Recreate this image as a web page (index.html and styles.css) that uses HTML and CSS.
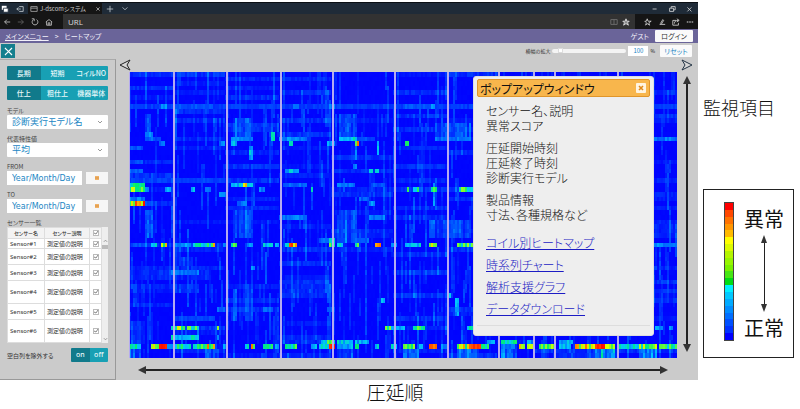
FILE: index.html
```html
<!DOCTYPE html>
<html lang="ja">
<head>
<meta charset="utf-8">
<title>ヒートマップ</title>
<link rel="stylesheet" href="styles.css">
</head>
<body>
<div class="page">
  <div class="left">
    <div class="app">
      <div class="tabbar">
        <svg class="ic" viewBox="0 0 10 10"><path d="M1 1h6v5H1z" fill="#fff"/><path d="M3 4h6v5H3z" fill="#fff" stroke="#1f2b38"/></svg>
        <svg class="ic" viewBox="0 0 10 10"><path d="M4 2h5v6H4M6 5H1M3 3L1 5l2 2" fill="none" stroke="#cdd3d8"/></svg>
        <div class="tab">
          <svg class="ic" viewBox="0 0 10 10"><path d="M1 2h8v6H1zM1 4h8" fill="none" stroke="#aaa"/></svg>
          <span class="tabname">J-dscomシステム</span>
          <svg class="ic" viewBox="0 0 10 10"><path d="M3 3l4 4M7 3L3 7" stroke="#bbb"/></svg>
        </div>
        <svg class="ic" viewBox="0 0 10 10"><path d="M5 1v8M1 5h8" stroke="#c4cbd2"/></svg>
        <svg class="ic" viewBox="0 0 10 10"><path d="M2 3l3 3 3-3" fill="none" stroke="#c4cbd2"/></svg>
        <div class="wincontrols">
          <svg class="ic" viewBox="0 0 10 10"><path d="M2 5h5" stroke="#ddd"/></svg>
          <svg class="ic" viewBox="0 0 10 10"><path d="M2 4h5v4H2zM4 4V2h5v4H7" fill="none" stroke="#ddd"/></svg>
          <svg class="ic" viewBox="0 0 10 10"><path d="M3 3l5 5M8 3L3 8" stroke="#ddd"/></svg>
        </div>
      </div>
      <div class="urlbar">
        <div class="nav">
          <svg class="ic" viewBox="0 0 10 10"><path d="M9 5H2M5 2L2 5l3 3" fill="none" stroke="#ccc"/></svg>
          <svg class="ic" viewBox="0 0 10 10"><path d="M1 5h7M5 2l3 3-3 3" fill="none" stroke="#666"/></svg>
          <svg class="ic" viewBox="0 0 10 10"><path d="M3 2a3.6 3.6 0 1 0 4 0M1 1h3v3" fill="none" stroke="#ccc"/></svg>
          <svg class="ic" viewBox="0 0 10 10"><path d="M1 5l4-3 4 3M2 5v4h6V5M4 9V6h2v3" fill="none" stroke="#ccc"/></svg>
        </div>
        <div class="address">
          <input class="url" type="text" value="URL" aria-label="URL">
          <svg class="ic" viewBox="0 0 10 10"><path d="M1 2h8v6H1zM5 2v6" fill="none" stroke="#777"/></svg>
          <svg class="ic" viewBox="0 0 10 10"><path d="M5 1l1 3h3L7 6l1 3-3-2-3 2 1-3-2-2h3z" fill="#888" stroke="#eee"/></svg>
        </div>
        <div class="tools">
          <svg class="ic" viewBox="0 0 10 10"><path d="M4 1l1 3h4L6 6l1 3-3-2-2 2 1-3-2-2h2z" fill="none" stroke="#ddd"/></svg>
          <svg class="ic" viewBox="0 0 10 10"><path d="M3 7l3-5 1 1-3 5H2M4 8h5" fill="none" stroke="#ddd"/></svg>
          <svg class="ic" viewBox="0 0 10 10"><path d="M5 3H1v6h7V6M3 7c0-3 2-4 5-4M6 1l3 2-3 2" fill="none" stroke="#ddd"/></svg>
          <svg class="ic" viewBox="0 0 10 10"><path d="M1 5h2M4 5h2M7 5h2" stroke="#ddd" stroke-width="1.5"/></svg>
        </div>
      </div>
      <div class="crumbs">
        <a href="#">メインメニュー</a><span>&gt;</span><span>ヒートマップ</span>
        <span class="guest">ゲスト</span><button class="btn login" type="button">ログイン</button>
      </div>

      <div class="workspace">
        <div class="side">
          <button class="close" type="button" aria-label="閉じる"><svg viewBox="0 0 14 14"><path d="M4 4l7 7M11 4l-7 7" stroke="#fff" stroke-width="1.2"/></svg></button>
          <div class="panel">
            <div class="seg"><button type="button" class="on">長期</button><button type="button">短期</button><button type="button">コイルNO</button></div>
            <div class="seg"><button type="button" class="on">仕上</button><button type="button">粗仕上</button><button type="button">機器単体</button></div>
            <div class="field">
              <label for="model">モデル</label>
              <div class="selectbox"><select id="model"><option>診断実行モデル名</option></select><svg class="chev" viewBox="0 0 6 4"><path d="M1 1l2 2 2-2" fill="none" stroke="#999"/></svg></div>
            </div>
            <div class="field">
              <label for="stat">代表特性値</label>
              <div class="selectbox"><select id="stat"><option>平均</option></select><svg class="chev" viewBox="0 0 6 4"><path d="M1 1l2 2 2-2" fill="none" stroke="#999"/></svg></div>
            </div>
            <div class="field">
              <label for="from">FROM</label>
              <div class="daterow"><input id="from" type="text" value="Year/Month/Day"><button type="button" aria-label="カレンダー"><svg viewBox="0 0 4 4"><path d="M0 0h4v4H0z" fill="#f0b268"/><path d="M0 2h4" stroke="#d99242"/></svg></button></div>
            </div>
            <div class="field">
              <label for="to">TO</label>
              <div class="daterow"><input id="to" type="text" value="Year/Month/Day"><button type="button" aria-label="カレンダー"><svg viewBox="0 0 4 4"><path d="M0 0h4v4H0z" fill="#f0b268"/><path d="M0 2h4" stroke="#d99242"/></svg></button></div>
            </div>
            <div class="listtitle">センサー一覧</div>
            <div class="list">
              <table>
                <thead><tr><th>センサー名</th><th>センサー説明</th><th><span class="tick"><input type="checkbox" checked aria-label="すべて"><svg viewBox="0 0 6 6"><path d="M1 3l2 1 2-3" fill="none" stroke="#888"/></svg></span></th></tr></thead>
                <tbody>
                  <tr class="short"><td>Sensor#1</td><td>測定値の説明</td><td><span class="tick"><input type="checkbox" checked aria-label="Sensor#1"><svg viewBox="0 0 6 6"><path d="M1 3l2 1 2-3" fill="none" stroke="#888"/></svg></span></td></tr>
                  <tr><td>Sensor#2</td><td>測定値の説明</td><td><span class="tick"><input type="checkbox" checked aria-label="Sensor#2"><svg viewBox="0 0 6 6"><path d="M1 3l2 1 2-3" fill="none" stroke="#888"/></svg></span></td></tr>
                  <tr><td>Sensor#3</td><td>測定値の説明</td><td><span class="tick"><input type="checkbox" checked aria-label="Sensor#3"><svg viewBox="0 0 6 6"><path d="M1 3l2 1 2-3" fill="none" stroke="#888"/></svg></span></td></tr>
                  <tr class="tall"><td>Sensor#4</td><td>測定値の説明</td><td><span class="tick"><input type="checkbox" checked aria-label="Sensor#4"><svg viewBox="0 0 6 6"><path d="M1 3l2 1 2-3" fill="none" stroke="#888"/></svg></span></td></tr>
                  <tr><td>Sensor#5</td><td>測定値の説明</td><td><span class="tick"><input type="checkbox" checked aria-label="Sensor#5"><svg viewBox="0 0 6 6"><path d="M1 3l2 1 2-3" fill="none" stroke="#888"/></svg></span></td></tr>
                  <tr class="tall"><td>Sensor#6</td><td>測定値の説明</td><td><span class="tick"><input type="checkbox" checked aria-label="Sensor#6"><svg viewBox="0 0 6 6"><path d="M1 3l2 1 2-3" fill="none" stroke="#888"/></svg></span></td></tr>
                  <tr class="rest"><td></td><td></td><td></td></tr>
                </tbody>
              </table>
              <div class="scroll">
                <svg viewBox="0 0 6 4"><path d="M1 3l2-2 2 2" fill="none" stroke="#888"/></svg>
                <div class="thumb"></div>
                <svg viewBox="0 0 6 4"><path d="M1 1l2 2 2-2" fill="none" stroke="#888"/></svg>
              </div>
            </div>
            <div class="exclude"><span>空白列を除外する</span><div class="seg toggle"><button type="button" class="on">on</button><button type="button">off</button></div></div>
          </div>
        </div>

        <div class="main">
          <div class="toolbar">
            <label for="zoom">横幅の拡大</label>
            <input id="zoom" type="range" min="0" max="100" value="8">
            <input class="pct" type="text" value="100" aria-label="拡大率"><span class="unit">%</span>
            <button class="btn reset" type="button">リセット</button>
          </div>
          <div class="pager">
            <svg viewBox="0 0 12 12"><path d="M11 1L1 6l10 5-3-5z" fill="#d6d6d6" stroke="#222" stroke-linejoin="round"/></svg>
            <svg viewBox="0 0 12 12"><path d="M1 1l10 5-10 5 3-5z" fill="#d6d6d6" stroke="#234" stroke-linejoin="round"/></svg>
          </div>
          <div class="plotrow">
            <div class="plot">
              <canvas id="heat" width="548" height="286"></canvas>
              <div class="popup">
                <div class="poptitle"><span>ポップアップウィンドウ</span><button type="button" aria-label="閉じる"><svg viewBox="0 0 10 10"><path d="M3 3l4 4M7 3L3 7" stroke="#e08a1a" stroke-width="1.6"/></svg></button></div>
                <div class="popbody">
                  <p>センサー名、説明<br>異常スコア</p>
                  <p>圧延開始時刻<br>圧延終了時刻<br>診断実行モデル</p>
                  <p>製品情報<br>寸法、各種規格など</p>
                  <ul>
                    <li><a href="#">コイル別ヒートマップ</a></li>
                    <li><a href="#">時系列チャート</a></li>
                    <li><a href="#">解析支援グラフ</a></li>
                    <li><a href="#">データダウンロード</a></li>
                  </ul>
                </div>
              </div>
            </div>
            <div class="arrow vert"></div>
          </div>
          <div class="xaxis"><div class="arrow horiz"></div></div>
        </div>
      </div>
    </div>
    <div class="xlabel">圧延順</div>
  </div>

  <div class="right">
    <div class="ylabel">監視項目</div>
    <div class="legend">
      <div class="scale" id="scale"></div>
      <div class="ends"><span>異常</span><div class="arrow vert thin"></div><span>正常</span></div>
    </div>
  </div>
</div>
<script src="heatmap.js"></script>
</body>
</html>
```
FILE: styles.css
```css
* { box-sizing: border-box; }
body {
  margin: 0;
  background: #fff;
  color: #111;
  font-family: "Noto Sans CJK JP", sans-serif;
  font-size: 6px;
  font-feature-settings: "palt";
}
button, input, select { font: inherit; font-feature-settings: inherit; margin: 0; padding: 0; border: 0; border-radius: 0; }
svg { display: block; flex: none; }
.page { display: grid; grid-template-columns: minmax(0, 1fr) 102px; }
.app { margin-top: 2px; background: #cbcbcb; }
.ic { width: 8px; height: 8px; }

.tabbar { display: flex; align-items: center; gap: 4px; height: 12px; padding-left: 1px; border-top: 1px solid #0b0f14; background: #1f2b38; }
.tabbar .ic + .ic { margin-left: 3px; }
.tab { display: flex; align-items: center; gap: 2px; width: 74px; height: 11px; padding-left: 2px; background: #151515; color: #ccc; }
.tabname { flex: 1; white-space: nowrap; }
.wincontrols { display: flex; gap: 6px; margin-left: auto; padding-right: 5px; }
.urlbar { display: flex; height: 15px; background: #151515; }
.nav { display: flex; align-items: center; gap: 6px; width: 63px; padding-left: 3px; }
.address { display: flex; flex: 1; align-items: center; gap: 4px; padding: 0 5px; background: #323232; }
.url { flex: 1; min-width: 0; height: 12px; background: transparent; color: #ddd; font-family: "Open Sans", sans-serif; font-size: 8px; }
.tools { display: flex; align-items: center; gap: 6px; padding: 0 4px 0 9px; }
.crumbs { display: flex; align-items: center; gap: 6px; height: 14px; padding: 0 5px; background: #6a6499; color: #f2f0fa; font-size: 7px; line-height: 12px; }
.crumbs a { color: inherit; }
.guest { margin-left: auto; }
.btn { height: 12px; border-radius: 1px; background: #fafafa; font-size: 7px; line-height: 12px; }
.login { width: 38px; color: #333; }

.workspace { display: grid; grid-template-columns: 116px minmax(0, 1fr); }
.side { display: flex; flex-direction: column; }
.close { width: 14px; height: 14px; margin: 1px; background: #157f8e; }
.panel { flex: 1; padding: 6px 7px 0; border-top: 1px solid #aaa; border-right: 1px solid #999; border-bottom: 1px solid #999; }
.seg { display: flex; height: 14px; margin-bottom: 6px; border-radius: 1px; overflow: hidden; }
.seg button { flex: 1; background: #18a0b4; color: #e8f8fa; font-size: 7px; font-weight: 500; line-height: 14px; }
.seg .on { background: #117a8b; }
.field { margin-bottom: 5px; }
.field label, .listtitle { display: block; height: 9px; color: #444; line-height: 9px; }
.field label { font-size: 6px; }
.listtitle { font-size: 6px; }
.selectbox { display: grid; align-items: center; height: 14px; background: #fff; border-radius: 1px; }
.selectbox > * { grid-area: 1 / 1; }
.selectbox select { appearance: none; width: 100%; height: 14px; padding-left: 5px; background: transparent; color: #1a86c4; font-size: 9px; line-height: 14px; }
.chev { width: 6px; height: 4px; margin-right: 5px; justify-self: end; }
.daterow { display: flex; align-items: center; gap: 4px; }
.daterow input { width: 75px; height: 14px; padding-left: 5px; background: #fff; color: #1a86c4; font-family: "DejaVu Sans", sans-serif; font-size: 8px; }
.daterow button { display: grid; place-items: center; flex: 1; height: 12px; background: #f6f6f6; }
.daterow svg { width: 4px; height: 4px; }
.list { display: flex; height: 116px; background: #fff; overflow: hidden; }
.list table { flex: 1; border-collapse: collapse; table-layout: fixed; color: #333; }
.list th, .list td { height: 16px; padding: 0 0 0 2px; border: 1px solid #ddd; font-size: 6px; line-height: 8px; text-align: left; white-space: nowrap; }
.list td:first-child { font-family: "Noto Sans", sans-serif; }
.list th { height: 11px; padding: 0; background: #f3f3f3; font-size: 5px; font-weight: 500; text-align: center; }
.list th:nth-child(1) { width: 37px; }
.list th:nth-child(2) { width: 45px; }
.list td:nth-child(3) { padding: 0; text-align: center; }
.list .short td { height: 10px; }
.list .tall td { height: 23px; }
.list .rest td { height: 4px; }
.tick { display: grid; width: 6px; height: 6px; margin: 0 auto; }
.tick > * { grid-area: 1 / 1; }
.tick input { appearance: none; width: 6px; height: 6px; border: 1px solid #bbb; background: #fff; }
.tick svg { width: 6px; height: 6px; pointer-events: none; }
.scroll { display: flex; flex-direction: column; align-items: center; width: 6px; padding: 12px 0 2px; background: #eee; }
.scroll svg { width: 5px; height: 4px; }
.thumb { width: 6px; height: 4px; margin: 2px 0 auto; background: #bbb; }
.exclude { display: flex; align-items: center; justify-content: space-between; margin-top: 5px; color: #333; }
.toggle { width: 37px; margin: 0; }
.toggle button { font-family: "Noto Sans", sans-serif; }

.toolbar { display: flex; align-items: center; height: 15px; padding-right: 6px; }
.toolbar label { margin-left: auto; font-size: 5px; color: #333; }
#zoom { appearance: none; width: 74px; height: 4px; margin: 0 2px; border-radius: 2px; background: #f4f4f4; }
#zoom::-webkit-slider-thumb { appearance: none; width: 5px; height: 5px; background: #fff; border: 1px solid #ddd; }
.pct { width: 20px; height: 10px; background: #fff; color: #1a86c4; text-align: center; }
.unit { margin: 0 5px 0 2px; font-size: 5px; }
.reset { width: 32px; color: #1a86c4; }
.pager { display: flex; justify-content: space-between; align-items: center; height: 14px; padding: 0 5px 0 3px; }
.pager svg { width: 12px; height: 12px; }
.plotrow { display: flex; padding-left: 13px; }
.plot { position: relative; flex: 1; min-width: 0; }
.plot canvas { display: block; width: 100%; height: 286px; }
.arrow { position: relative; background: #222; }
.arrow::before, .arrow::after { content: ""; position: absolute; border: 4px solid transparent; }
.vert { width: 2px; margin: 12px 10px 14px 9px; }
.vert::before { left: -3px; bottom: 100%; border-bottom: 8px solid #333; border-top: 0; }
.vert::after { left: -3px; top: 100%; border-top: 8px solid #333; border-bottom: 0; }
.xaxis { display: flex; align-items: center; height: 22px; padding: 2px 38px 0 30px; }
.horiz { flex: 1; height: 2px; }
.horiz::before { top: -3px; right: 100%; border-right: 8px solid #333; border-left: 0; }
.horiz::after { top: -3px; left: 100%; border-left: 8px solid #333; border-right: 0; }

.popup { position: absolute; top: 4px; right: 23px; width: 181px; height: 260px; padding: 2px 3px; border: 1px solid #ddd; border-radius: 3px; background: #eee; font-size: 12px; font-weight: 300; line-height: 15px; }
.poptitle { display: flex; align-items: center; justify-content: space-between; height: 18px; padding: 0 3px 0 2px; border: 1px solid #e0952a; border-radius: 2px; background: #f8b64c; font-weight: 400; }
.poptitle button { width: 10px; height: 10px; border-radius: 1px; background: #fff4e0; }
.popbody { padding: 6px 0 5px 9px; border-bottom: 1px solid #ddd; }
.popbody p { margin: 0 0 7px; }
.popbody ul { margin: 10px 0 0; padding: 0; list-style: none; line-height: 22px; }
.popbody a { color: #1c1cc4; }

.xlabel { padding-left: 92px; font-size: 19px; font-weight: 300; line-height: 24px; text-align: center; }
.right { padding: 94px 6px 0 5px; }
.ylabel { font-size: 18px; font-weight: 300; line-height: 26px; }
.legend { display: flex; gap: 10px; height: 169px; margin-top: 69px; padding: 12px 8px 16px 20px; border: 1px solid #222; }
.scale { display: flex; flex-direction: column; width: 10px; border: 1px solid #444; }
.scale i { flex: 1; }
.ends { display: flex; flex-direction: column; align-items: center; padding-top: 4px; font-size: 20px; line-height: 26px; }
.thin { flex: 1; width: 1px; margin: 11px 0; }
.thin::before, .thin::after { border-left-width: 3px; border-right-width: 3px; }
```
FILE: heatmap.js
```js
// Colour stops from normal (0) to abnormal (1).
const stops = [[0, 0, 0, 255], [0.35, 0, 200, 255], [0.5, 0, 240, 110], [0.7, 220, 255, 0], [0.85, 255, 140, 0], [1, 255, 0, 0]];
function colour(t) {
  t = Math.max(0, Math.min(1, t));
  let i = 1;
  while (t > stops[i][0]) i++;
  const a = stops[i - 1], b = stops[i], f = (t - a[0]) / (b[0] - a[0]);
  return 'rgb(' + [1, 2, 3].map(k => Math.round(a[k] + (b[k] - a[k]) * f)).join(',') + ')';
}
let seed = 7;
function rnd() {
  seed = (seed * 1664525 + 1013904223) % 4294967296;
  return seed / 4294967296;
}

const W = 548, H = 286, ROWS = 62, CELL = 2;
const cols = W / CELL;
const breaks = [44, 97, 151, 203, 265, 318, 369, 404, 425, 488];
const grid = Array.from({ length: ROWS }, () => new Array(cols).fill(0));

// Faint background: each section has its own row strengths and column streaks.
const edges = [0, ...breaks, W];
for (let s = 0; s < edges.length - 1; s++) {
  const rowK = Array.from({ length: ROWS }, () => rnd() < 0.25 ? 0.04 + rnd() * 0.06 : 0.01);
  const left = Math.floor(edges[s] / CELL), right = Math.min(cols, Math.ceil(edges[s + 1] / CELL));
  for (let c = left; c < right; c++) {
    let streak = 0, until = 0;
    for (let r = 0; r < ROWS; r++) {
      if (r >= until) {
        streak = rnd() < 0.22 ? 0.04 + rnd() * 0.12 : 0;
        until = r + 3 + Math.floor(rnd() * 8);
      }
      grid[r][c] = rowK[r] * (0.4 + rnd() * 0.8) + streak * (0.4 + rnd() * 0.6);
    }
  }
}

// [first row, last row, from, to, level]
const marks = [
  [7,7,0,548,.12],[7,7,32,37,.3],[7,7,46,84,.16],[7,7,164,169,.3],[7,7,274,304,.18],[7,7,302,306,.36],[7,7,200,206,.25],
  [9,13,17,22,.2],[13,14,16,24,.33],[14,14,24,32,.15],[10,14,104,124,.24],[14,14,102,124,.26],[13,14,143,146,.5],[14,14,151,177,.28],
  [9,13,210,227,.2],[14,14,210,227,.44],[14,14,227,246,.16],[11,14,307,341,.2],[14,14,307,341,.23],[14,14,524,548,.25],
  [15,15,30,36,.22],[15,15,91,96,.26],[15,15,103,108,.4],[15,15,161,164,.5],[15,15,199,206,.3],[15,15,227,229,.9],[15,17,248,250,.35],[15,15,276,279,.55],
  [16,18,121,124,.36],[16,18,226,228,.25],[16,16,0,14,.18],[19,19,0,14,.15],[20,20,224,228,.25],
  [21,21,1,13,.2],[21,21,157,169,.37],[21,21,240,243,.45],[21,21,247,250,.4],[23,23,0,96,.13],
  [24,24,0,15,.5],[24,24,102,123,.38],[24,24,114,117,.75],[24,24,155,178,.2],[24,24,209,226,.23],[24,24,242,256,.18],
  [25,25,0,16,.68],[25,25,16,20,.35],[25,25,37,41,.38],[25,25,63,65,.35],[25,25,76,82,.22],[25,25,130,135,.25],[25,25,182,184,.45],
  [25,25,278,280,.55],[25,25,284,290,.5],[25,25,302,308,.6],[25,25,331,338,.65],[25,25,338,344,.55],[24,28,304,306,.3],
  [26,26,90,97,.25],[27,27,0,15,.25],[28,28,0,16,.9],[28,28,16,24,.18],[28,28,108,118,.22],[28,28,240,246,.28],[27,27,230,240,.2],
  [31,31,151,178,.25],[31,31,240,256,.25],[30,35,18,23,.25],[30,35,104,124,.22],[30,36,210,227,.27],[32,35,300,341,.2],
  [36,36,191,200,.2],[36,36,200,206,.48],[36,36,226,240,.2],
  [37,37,4,18,.17],[37,37,23,28,.5],[37,37,32,37,.72],[37,37,46,61,.3],[37,37,65,86,.5],[37,37,83,85,.75],[37,37,94,97,.28],
  [37,37,103,107,.62],[37,37,119,124,.3],[37,37,135,143,.42],[37,37,147,150,.35],[37,37,156,161,.55],[37,37,161,167,.9],[37,37,200,206,.6],
  [37,37,209,213,.5],[37,37,227,229,.55],[37,37,246,251,.8],[37,37,262,267,.33],[37,37,276,291,.4],[37,37,300,307,.7],
  [37,37,329,344,.6],[37,37,524,548,.27],[40,41,50,61,.17],[43,43,41,69,.24],[43,44,0,80,.1],[42,42,122,125,.3],
  [46,47,46,70,.15],[47,53,104,108,.2],[46,53,119,124,.24],[49,49,253,255,.4],[48,48,320,322,.4],[49,52,327,329,.34],
  [51,51,88,96,.23],[51,51,135,143,.2],[51,51,199,206,.26],[53,53,46,85,.13],
  [54,58,2,16,.2],[55,55,43,56,.5],[55,55,49,53,.7],[55,55,58,69,.6],[55,55,88,90,.65],[55,55,256,261,.7],[55,55,261,275,.38],
  [55,55,284,295,.6],[55,55,339,344,.45],[55,55,527,534,.33],[55,55,540,543,.28],
  [57,57,43,69,.43],[57,57,88,90,.4],[58,58,192,197,.35],[58,58,198,206,.58],[58,58,209,223,.42],[58,58,226,240,.35],
  [58,58,358,365,.33],[58,58,373,388,.5],[58,58,399,404,.3],[58,58,431,443,.35],
  [59,59,0,11,.52],[59,59,23,31,.78],[59,59,31,37,.97],[59,59,37,43,.3],[59,59,46,61,.5],[59,59,65,76,.58],[59,59,76,86,.8],[59,59,94,97,.36],
  [59,59,116,119,.5],[59,59,123,125,.8],[59,59,135,143,.65],[59,59,147,150,.3],[59,59,156,167,.6],[59,59,182,188,.33],[59,59,191,200,.45],
  [59,59,200,206,.95],[59,59,209,223,.33],[59,59,227,229,.55],[59,59,246,250,.38],[59,59,262,268,.4],[59,59,275,285,.64],[59,59,290,294,.5],
  [59,59,300,307,.92],[59,59,312,318,.3],[59,59,329,339,.76],[59,59,341,352,.95],[59,59,352,360,.6],[59,59,373,385,.28],[59,59,391,396,.82],
  [59,59,399,404,.7],[59,59,411,425,.7],[59,59,431,442,.36],[59,59,446,466,.84],[59,59,466,476,1],[59,59,476,485,.88],[59,59,490,509,.42],
  [59,59,511,528,.68],[59,59,530,548,.55],
  [60,61,0,12,.27],[60,61,76,90,.2],[60,61,209,223,.2],[60,61,275,290,.25],[60,61,329,350,.25],[60,61,373,388,.28],[60,61,466,486,.45],[60,61,511,527,.42]
];
for (const [r0, r1, x0, x1, level] of marks) {
  for (let c = Math.floor(x0 / CELL); c < x1 / CELL && c < cols; c++) {
    // Tall patches are made of uneven columns; single rows vary less.
    const column = r1 > r0 && x1 - x0 > 4 ? 0.25 + rnd() * 0.85 : 1;
    for (let r = r0; r <= r1; r++) {
      const k = level > 0.9 ? 0.92 + rnd() * 0.1 : 0.6 + rnd() * 0.5;
      grid[r][c] = Math.max(grid[r][c], level * k * column);
    }
  }
}

const ctx = document.getElementById('heat').getContext('2d');
for (let r = 0; r < ROWS; r++) {
  const y0 = Math.round(r * H / ROWS), y1 = Math.round((r + 1) * H / ROWS);
  for (let c = 0; c < cols; c++) {
    ctx.fillStyle = colour(grid[r][c]);
    ctx.fillRect(c * CELL, y0, CELL, y1 - y0);
  }
}
ctx.fillStyle = '#b4aaf0';
for (const x of breaks) ctx.fillRect(x, 0, 2, H);
ctx.fillRect(0, 0, 1, H);

const scale = document.getElementById('scale');
for (const c of ['#f00', '#ff4800', '#ff7200', '#ff9600', '#ffba00', '#ff0', '#dcfa00', '#b4f500', '#96f500', '#78f000', '#46e614', '#00dc14', '#00f0ff', '#00c8ff', '#00aaff', '#008cff', '#006eff', '#0050ff', '#0032ff', '#0000ff']) {
  const cell = document.createElement('i');
  cell.style.background = c;
  scale.appendChild(cell);
}
```
